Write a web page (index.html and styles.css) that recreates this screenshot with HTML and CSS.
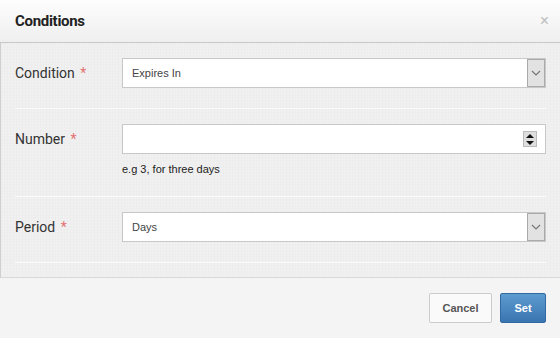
FILE: index.html
```html
<!DOCTYPE html>
<html lang="en">
<head>
    <meta charset="UTF-8">
    <title>Conditions</title>
    <link rel="stylesheet" href="styles.css">
</head>
<body>
    <div class="modal">
        <div class="modal-header">
            <h4>Conditions</h4>
            <span class="close">&times;</span>
        </div>

        <div class="modal-body">
            <div class="form-row">
                <label>Condition <span class="req">*</span></label>
                <div class="field">
                    <div class="select-box">
                        <span>Expires In</span>
                        <span class="select-arrow">
                            <svg width="10" height="6" viewBox="0 0 10 6"><path d="M1 1 L5 5 L9 1" fill="none" stroke="#777" stroke-width="1.2"/></svg>
                        </span>
                    </div>
                </div>
            </div>

            <div class="form-row">
                <label>Number <span class="req">*</span></label>
                <div class="field">
                    <div class="input-box">
                        <span class="spinner">
                            <span class="spin-up"></span>
                            <span class="spin-down"></span>
                        </span>
                    </div>
                    <div class="help">e.g 3, for three days</div>
                </div>
            </div>

            <div class="form-row">
                <label>Period <span class="req">*</span></label>
                <div class="field">
                    <div class="select-box">
                        <span>Days</span>
                        <span class="select-arrow">
                            <svg width="10" height="6" viewBox="0 0 10 6"><path d="M1 1 L5 5 L9 1" fill="none" stroke="#777" stroke-width="1.2"/></svg>
                        </span>
                    </div>
                </div>
            </div>
        </div>

        <div class="modal-footer">
            <button class="btn btn-default">Cancel</button>
            <button class="btn btn-primary">Set</button>
        </div>
    </div>
</body>
</html>
```

FILE: styles.css
```css
body {
    margin: 0;
    font-family: Roboto, 'Liberation Sans', sans-serif;
    background: #f4f4f4;
}

.modal {
    width: 560px;
    height: 338px;
    display: flex;
    flex-direction: column;
}

.modal-header {
    height: 43px;
    box-sizing: border-box;
    padding: 0 15px;
    display: flex;
    align-items: center;
    justify-content: space-between;
    background: linear-gradient(#fdfdfd, #efefef);
    border-bottom: 1px solid #c8c8c8;
}

.modal-header h4 {
    margin: 0;
    font-size: 15px;
    font-weight: bold;
    color: #222;
    letter-spacing: -0.3px;
}

.close {
    color: #bbb;
    font-size: 16px;
    margin-right: -4px;
    font-family: 'Liberation Sans', sans-serif;
}

.modal-body {
    background-color: #efefef;
    background-image:
        repeating-linear-gradient(0deg, rgba(255,255,255,0.12) 0 1px, transparent 1px 3px),
        repeating-linear-gradient(90deg, rgba(0,0,0,0.01) 0 1px, transparent 1px 3px);
    border-left: 1px solid #cfcfcf;
    border-bottom: 1px solid #d8d8d8;
    padding: 15px 14px 0 14px;
    height: 235px;
    box-sizing: border-box;
}

.form-row {
    display: flex;
    padding-bottom: 20px;
    margin-bottom: 15px;
    border-bottom: 1px solid #fafafa;
}

.form-row label {
    width: 107px;
    flex-shrink: 0;
    font-size: 14px;
    color: #333;
    line-height: 30px;
}

.req {
    color: #e57373;
    margin-left: 2px;
}

.field {
    flex: 1;
}

.select-box,
.input-box {
    height: 30px;
    box-sizing: border-box;
    background: #fff;
    border: 1px solid #c8c8c8;
    display: flex;
    align-items: center;
    justify-content: space-between;
    padding-left: 9px;
    font-size: 11px;
    color: #444;
    font-family: 'Liberation Sans', sans-serif;
}

.select-arrow {
    width: 18px;
    height: 28px;
    box-sizing: border-box;
    background: #e2e2e2;
    border: 1px solid #aaa;
    display: flex;
    align-items: center;
    justify-content: center;
}

.input-box {
    justify-content: flex-end;
    padding-right: 8px;
}

.spinner {
    width: 14px;
    height: 16px;
    box-sizing: border-box;
    border: 1px solid #bbb;
    background: #dedede;
    display: flex;
    flex-direction: column;
    align-items: center;
    justify-content: space-around;
}

.spin-up,
.spin-down {
    width: 0;
    height: 0;
    border-left: 4px solid transparent;
    border-right: 4px solid transparent;
}

.spin-up {
    border-bottom: 4px solid #111;
}

.spin-down {
    border-top: 4px solid #111;
}

.help {
    margin-top: 9px;
    line-height: 13px;
    font-size: 11px;
    color: #222;
    font-family: 'Liberation Sans', sans-serif;
}

.modal-footer {
    flex: 1;
    display: flex;
    justify-content: flex-end;
    align-items: flex-start;
    padding: 15px 14px 0 0;
    gap: 8px;
    background: #f4f4f4;
}

.btn {
    height: 30px;
    font-family: 'Liberation Sans', sans-serif;
    font-size: 11px;
    font-weight: bold;
    border-radius: 2px;
    cursor: pointer;
}

.btn-default {
    width: 63px;
    background: #fafafa;
    color: #555;
    border: 1px solid #ccc;
}

.btn-primary {
    width: 46px;
    background: linear-gradient(#5d9ccf, #3a74b1);
    color: #fff;
    border: 1px solid #3269a3;
}
```
